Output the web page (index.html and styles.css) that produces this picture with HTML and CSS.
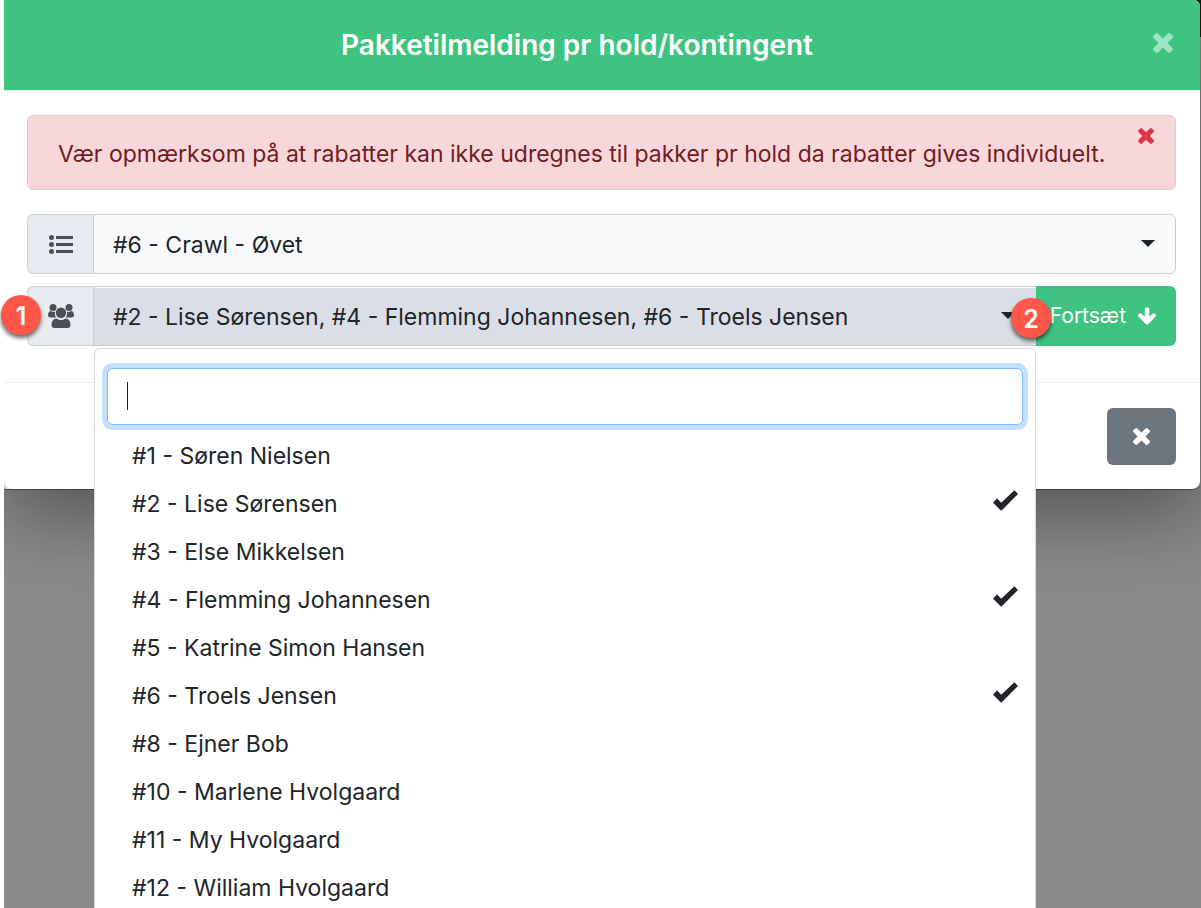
FILE: index.html
```html
<!DOCTYPE html>
<html lang="da">
<head>
    <meta charset="UTF-8">
    <meta name="viewport" content="width=device-width, initial-scale=1.0">
    <title>Pakketilmelding pr hold/kontingent</title>
    <link rel="stylesheet" href="styles.css">
</head>
<body>
    <!-- Shared icons -->
    <svg class="icon-defs" aria-hidden="true">
        <symbol id="icon-times" viewBox="302 366 1188 1188">
            <path d="M1490 1322q0 40-28 68l-136 136q-28 28-68 28t-68-28l-294-294-294 294q-28 28-68 28t-68-28l-136-136q-28-28-28-68t28-68l294-294-294-294q-28-28-28-68t28-68l136-136q28-28 68-28t68 28l294 294 294-294q28-28 68-28t68 28l136 136q28 28 28 68t-28 68l-294 294 294 294q28 28 28 68z"/>
        </symbol>
        <symbol id="icon-check" viewBox="0 0 76 63">
            <path d="M0 38L12 25 25 38 65 0 76 12 25 63z"/>
        </symbol>
    </svg>

    <div class="modal" role="dialog" aria-labelledby="modal-title">
        <div class="modal-header">
            <h1 class="modal-title" id="modal-title">Pakketilmelding pr hold/kontingent</h1>
            <button type="button" class="close" aria-label="Luk">
                <svg width="20" height="20"><use href="#icon-times"/></svg>
            </button>
        </div>

        <div class="modal-body">
            <div class="alert" role="alert">
                <span>Vær opmærksom på at rabatter kan ikke udregnes til pakker pr hold da rabatter gives individuelt.</span>
                <button type="button" class="alert-close" aria-label="Luk besked">
                    <svg width="16" height="16"><use href="#icon-times"/></svg>
                </button>
            </div>

            <div class="input-group">
                <label class="addon" for="team" aria-label="Hold">
                    <svg width="24" height="19" viewBox="0 0 24 19">
                        <circle cx="2.5" cy="2.5" r="2.5"/>
                        <circle cx="2.5" cy="9.5" r="2.5"/>
                        <circle cx="2.5" cy="16.5" r="2.5"/>
                        <path d="M7 1h17v3H7zM7 8h17v3H7zM7 15h17v3H7z"/>
                    </svg>
                </label>
                <div class="select">
                    <select id="team">
                        <option>#6 - Crawl - Øvet</option>
                    </select>
                </div>
            </div>

            <div class="input-group">
                <label class="addon" for="members" aria-label="Medlemmer">
                    <svg width="26" height="24" viewBox="0 0 26 24">
                        <circle cx="5" cy="3.5" r="3.5"/>
                        <circle cx="21" cy="3.5" r="3.5"/>
                        <path d="M3 7q2 1.500 4 .6-.8 3.400 1.200 6H2.500Q0 13.600 0 11.500 0 7 3 7zM23 7q-2 1.500-4 .6.8 3.400-1.200 6h5.700q2.500 0 2.500-2.100Q26 7 23 7z"/>
                        <circle cx="13" cy="8.700" r="5.200"/>
                        <path d="M8.500 14.500q4.500 3 9 0 5 .5 5 6.500 0 3-3 3H6.500q-3 0-3-3 0-6 5-6.500z"/>
                    </svg>
                    <span class="badge">1</span>
                </label>
                <div class="select open">
                    <button type="button" class="select-toggle" id="members" aria-haspopup="listbox" aria-expanded="true">#2 - Lise Sørensen, #4 - Flemming Johannesen, #6 - Troels Jensen</button>
                    <div class="dropdown-menu">
                        <div class="search">
                            <input type="text" aria-label="Søg medlem">
                        </div>
                        <ul class="options" role="listbox" aria-multiselectable="true">
                            <li role="option">#1 - Søren Nielsen</li>
                            <li role="option" aria-selected="true">#2 - Lise Sørensen <svg width="25" height="21"><use href="#icon-check"/></svg></li>
                            <li role="option">#3 - Else Mikkelsen</li>
                            <li role="option" aria-selected="true">#4 - Flemming Johannesen <svg width="25" height="21"><use href="#icon-check"/></svg></li>
                            <li role="option">#5 - Katrine Simon Hansen</li>
                            <li role="option" aria-selected="true">#6 - Troels Jensen <svg width="25" height="21"><use href="#icon-check"/></svg></li>
                            <li role="option">#8 - Ejner Bob</li>
                            <li role="option">#10 - Marlene Hvolgaard</li>
                            <li role="option">#11 - My Hvolgaard</li>
                            <li role="option">#12 - William Hvolgaard</li>
                        </ul>
                    </div>
                </div>
                <button type="button" class="btn-continue">
                    <span class="badge">2</span>
                    Fortsæt
                    <svg width="18" height="18" viewBox="117 128 1558 1483">
                        <path d="M1675 832q0 53-37 90l-651 652q-39 37-91 37-53 0-90-37l-651-652q-38-36-38-90 0-53 38-91l74-75q39-37 91-37 53 0 90 37l294 294v-704q0-52 38-90t90-38h128q52 0 90 38t38 90v704l294-294q37-37 90-37 52 0 91 37l75 75q37 39 37 91z"/>
                    </svg>
                </button>
            </div>
        </div>

        <div class="modal-footer">
            <button type="button" class="btn-dismiss" aria-label="Luk">
                <svg width="17" height="17"><use href="#icon-times"/></svg>
            </button>
        </div>
    </div>
</body>
</html>
```
FILE: styles.css
```css
* {
    box-sizing: border-box;
}
html {
    overflow: hidden;
    background-color: #fff;
}
body {
    margin: 0;
    padding-left: 4px;
    height: 100vh;
    overflow: hidden;
    background: linear-gradient(#101418 37px, #8a8a8a 37px) content-box;
    color: #212529;
    font-family: Inter, "Liberation Sans", sans-serif;
    font-size: 23px;
    line-height: 36px;
}
button,
input,
select {
    margin: 0;
    color: inherit;
    font: inherit;
}
button {
    border: none;
    cursor: pointer;
}
svg {
    display: block;
    flex: none;
    fill: currentColor;
}
.icon-defs {
    position: absolute;
    width: 0;
    height: 0;
}

/* Modal */
.modal {
    position: relative;
    z-index: 0;
    margin-right: 1px;
    background-color: #fff;
    border-bottom: 1px solid #555;
    border-radius: 0 6px 8px 2px;
}
.modal::before {
    content: "";
    position: absolute;
    inset: 0;
    z-index: -1;
    border-radius: 8px;
    box-shadow: 0 24px 80px rgba(0, 0, 0, 0.4);
    clip-path: inset(0 -1px -200px 0);
}
.modal-header {
    display: flex;
    align-items: center;
    height: 91px;
    padding-left: 24px;
    background-color: #3ec480;
    border-bottom: 1px solid #e9ecef;
    border-top-right-radius: 6px;
    color: #fff;
}
.modal-title {
    flex: 1;
    margin: 0;
    font-size: 28px;
    font-weight: 600;
    text-align: center;
}
.close {
    display: flex;
    justify-content: center;
    width: 74px;
    padding: 0 0 4px;
    background: none;
    color: rgba(255, 255, 255, 0.5);
}
.modal-body {
    display: flex;
    flex-direction: column;
    gap: 12px;
    padding: 24px 24px 36px 23px;
}
.modal-footer {
    display: flex;
    justify-content: flex-end;
    padding: 25px 24px 24px;
    border-top: 1px solid #e9ecef;
}
.btn-dismiss {
    padding: 20px 26px;
    background-color: #6c757d;
    border-radius: 6px;
    color: #fff;
}

/* Alert */
.alert {
    position: relative;
    margin-bottom: 12px;
    padding: 20px 30px 17px;
    background-color: #f8d7da;
    border: 1px solid #f1c5ca;
    border-radius: 6px;
    color: #721c24;
}
.alert-close {
    position: absolute;
    top: 12px;
    right: 21px;
    padding: 0;
    background: none;
    color: #dc3545;
}

/* Input groups */
.input-group {
    display: flex;
    height: 60px;
}
.addon {
    position: relative;
    display: flex;
    align-items: center;
    justify-content: center;
    width: 66px;
    background-color: #e9ecef;
    border: 1px solid #ced4da;
    border-right: none;
    border-radius: 6px 0 0 6px;
    color: #495057;
}
.select {
    position: relative;
    flex: 1;
    min-width: 0;
}
.select select,
.select-toggle {
    display: block;
    width: 100%;
    height: 100%;
    padding: 2px 48px 0 19px;
    appearance: none;
    background-color: #f8f9fb;
    border: 1px solid #ccc;
    border-radius: 0 6px 6px 0;
    box-shadow: inset 0 1px 0 #fff;
    text-align: left;
}
.select-toggle {
    overflow: hidden;
    background-color: #dadee6;
    border-radius: 0;
    border-right: none;
    text-overflow: ellipsis;
    white-space: nowrap;
}
.select::after {
    content: "";
    position: absolute;
    top: 26px;
    right: 21px;
    border: 7px solid transparent;
    border-top-color: #212529;
    border-bottom: none;
    pointer-events: none;
}
.btn-continue {
    position: relative;
    display: flex;
    align-items: center;
    justify-content: flex-end;
    gap: 12px;
    width: 140px;
    padding: 0 20px 0 0;
    background-color: #3ec480;
    border-radius: 0 6px 6px 0;
    color: #fff;
    font-size: 21px;
}

/* Step markers */
.badge {
    position: absolute;
    top: 8px;
    left: -27px;
    z-index: 3;
    width: 40px;
    height: 40px;
    background-color: #ff584a;
    border-radius: 50%;
    box-shadow: 0 3px 4px rgba(0, 0, 0, 0.6);
    color: #fff;
    font-size: 25px;
    font-weight: 600;
    line-height: 42px;
    text-align: center;
}
.btn-continue .badge {
    top: 12px;
    left: -25px;
}

/* Dropdown */
.dropdown-menu {
    position: absolute;
    top: 62px;
    left: 1px;
    right: 0;
    z-index: 2;
    padding: 19px 12px;
    background-color: #fff;
    border: 1px solid #d5d7da;
    border-radius: 6px;
}
.search {
    position: relative;
}
.search input {
    display: block;
    width: 100%;
    height: 57px;
    padding: 0 18px;
    background-color: #fff;
    border: 1px solid #80bdff;
    border-radius: 6px;
    outline: none;
    box-shadow: 0 0 0 5px #c5e0ff;
}
/* Text cursor */
.search::after {
    content: "";
    position: absolute;
    top: 14px;
    left: 20px;
    width: 1px;
    height: 28px;
    background-color: #212529;
}
.options {
    margin: 7px -12px 0;
    padding: 0;
    list-style: none;
}
.options li {
    display: flex;
    justify-content: space-between;
    padding: 6px 17px 6px 37px;
    cursor: pointer;
}
.options svg {
    margin-top: 4px;
}
```
